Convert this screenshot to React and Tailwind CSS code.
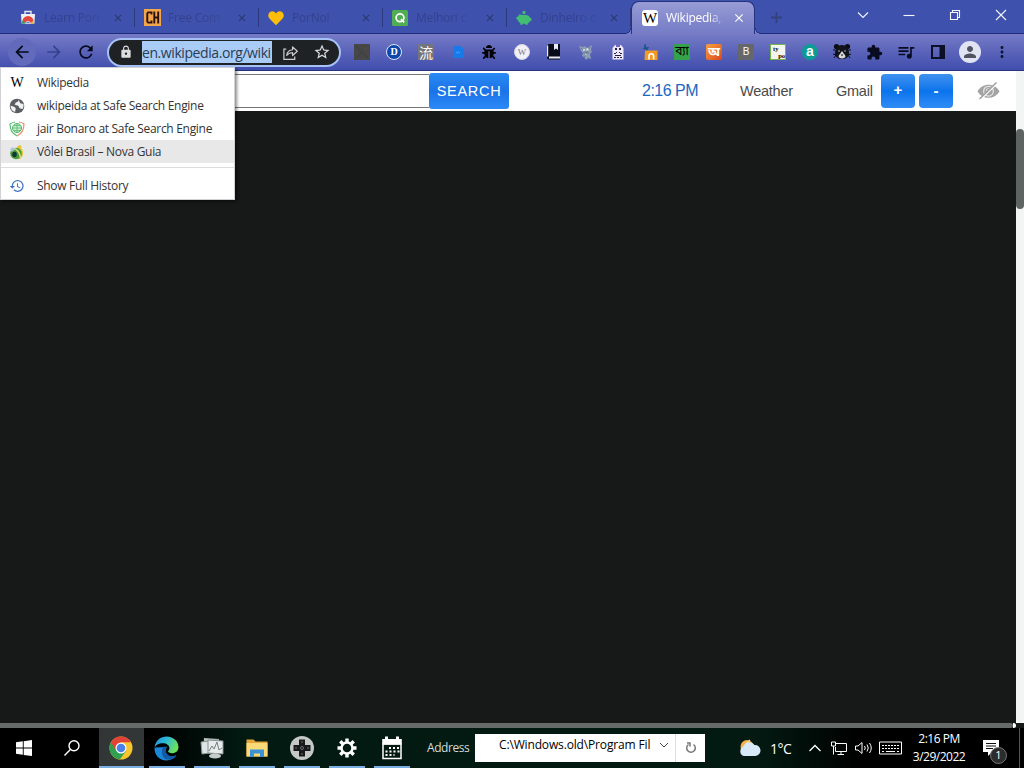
import {
  MdArrowBack,
  MdArrowForward,
  MdClose,
  MdExtension,
  MdHistory,
  MdLock,
  MdMoreVert,
  MdPerson,
  MdQueueMusic,
  MdRefresh,
  MdStarBorder,
} from 'react-icons/md';
import { FaBug } from 'react-icons/fa';

const TABS = [
  { title: 'Learn Pon', icon: <StoreIcon /> },
  { title: 'Free Com', icon: <ChIcon /> },
  { title: 'PorNo!', icon: <HeartIcon /> },
  { title: 'Melhori c', icon: <QIcon /> },
  { title: 'Dinheiro c', icon: <PiggyIcon /> },
];

/* ---------- favicons ---------- */

function StoreIcon() {
  return (
    <svg viewBox="0 0 16 16" className="size-4">
      <path d="M5 4V1.5h6V4" fill="none" stroke="#e8e8ee" strokeWidth="1.4" />
      <path d="M1 4h14l-.6 9.6H1.6z" fill="#eef0f4" />
      <path d="M2.500 11.500a5.500 5.500 0 0 1 11 0L10 13.600H6z" fill="#e4483b" />
      <path d="M2.300 10.500l3.700 3.100H1.700z" fill="#2f9e58" />
      <path d="M13.700 10.500L10 13.600h4.300z" fill="#f5c431" />
      <path d="M5.700 13.600a2.300 2.300 0 0 1 4.600 0z" fill="#4a86e8" stroke="#fff" strokeWidth=".6" />
    </svg>
  );
}

function ChIcon() {
  return (
    <svg viewBox="0 0 17 17" className="size-[17px]">
      <rect width="17" height="17" fill="#f3a649" />
      <path d="M7.500 5.500V3.400H4.200l-.9 1v8.200l.9 1h3.300v-2.100M10.300 2.500v12M14.200 2.500v12M10 8.500h4.300" fill="none" stroke="#2c0f10" strokeWidth="1.900" />
    </svg>
  );
}

function HeartIcon() {
  return (
    <svg viewBox="0 0 16 16" className="size-4">
      <path d="M8 15.2L1.2 8.2A4.2 4.2 0 0 1 .6 4C1.6.7 6 .4 8 3.4 10 .4 14.4.7 15.4 4a4.2 4.2 0 0 1-.6 4.2z" fill="#fcbd0b" />
    </svg>
  );
}

function QIcon() {
  return (
    <svg viewBox="0 0 16 16" className="size-4">
      <rect width="16" height="16" rx="1.5" fill="#4fae51" />
      <circle cx="8" cy="7.800" r="3.900" fill="none" stroke="#fff" strokeWidth="1.700" />
      <path d="M9 9.200l3.200 3.200" stroke="#fff" strokeWidth="1.700" />
    </svg>
  );
}

function PiggyIcon() {
  return (
    <svg viewBox="0 0 16 16" className="size-4">
      <circle cx="8" cy="2.500" r="1.700" fill="#43bd72" />
      <path d="M3 4l3 1h4.500C13 5.200 13.800 7 14.200 8l1.300.3v2.300l-1.800.9c-.6 1-1.200 1.500-2 2v1.200H9.600l-.4-1H6.800l-.4 1H4.400v-1.500C2.500 12 1.800 10.500 1.500 9.500L.4 9V7l1.300-.3C2 6 2.800 5.500 3.300 5.300z" fill="#43bd72" />
    </svg>
  );
}

function WikiIcon({ boxed }) {
  return (
    <span
      className={
        boxed
          ? 'flex size-4 items-center justify-center rounded-[3px] bg-white font-["Liberation_Serif",serif] text-[15px] leading-none text-black'
          : 'flex size-4 items-center justify-center font-["Liberation_Serif",serif] text-[14px] leading-none text-black'
      }
    >
      W
    </span>
  );
}

/* ---------- extension icons ---------- */

function Glyph({ children, className }) {
  return <span className={`flex size-4 items-center justify-center leading-none ${className}`}>{children}</span>;
}

function ShareIcon() {
  return (
    <svg viewBox="0 0 18 18" className="size-[17px]" fill="none" stroke="#c9cbd0" strokeWidth="1.300">
      <path d="M4.500 5.500H2v10.800h11.500v-3" />
      <path d="M5 12c.5-4 2.500-5.700 6.200-5.900V3l5 4.600-5 4.600V9.200C8.500 9.200 6.800 10 5 12z" strokeLinejoin="round" />
    </svg>
  );
}

function BookIcon() {
  return (
    <svg viewBox="0 0 16 16" className="size-4">
      <path d="M2.500 0H14v15.500H3A2 2 0 0 1 1 13.500V2z" fill="#080b19" />
      <path d="M8 0h4v6l-2-1.500L8 6zM1 1.500h1.200v11H1z" fill="#e9ebf5" />
      <path d="M3 12.500h11v2H3z" fill="#e9ebf5" />
    </svg>
  );
}

function BirdIcon() {
  return (
    <svg viewBox="0 0 16 16" className="size-4">
      <path d="M1 2l4 1 2-1 2 2 5-3-1 5 1 2-2 2 1 5-3-1-2 2-2-3-2-1 1-3-2-2z" fill="#8d9db4" />
      <path d="M3 4l4 4M12 3L9 8l-3 6M5 9h6" stroke="#6273a0" strokeWidth=".8" />
      <circle cx="9.500" cy="5.500" r="1.200" fill="#dfe7e0" />
      <circle cx="6" cy="6" r="1" fill="#dfe7e0" />
      <circle cx="8" cy="10.500" r="1" fill="#b9c9b8" />
    </svg>
  );
}

function GhostIcon() {
  return (
    <svg viewBox="0 0 16 16" className="size-4">
      <path d="M5 1h6l2.500 3v11.500h-11V4z" fill="#eee9fa" />
      <path d="M5 4h2v2H5zM9 4h2v2H9zM6 8h1v1H6zM9 8h1v1H9zM4 9h2v1H4zM10 9h2v1h-2zM5 11h6v1H5zM4 13h2v1H4zM7 13h2v1H7zM10 13h2v1h-2z" fill="#2a2142" />
      <path d="M6 1h4v2H6z" fill="#7c62ca" />
    </svg>
  );
}

function BagIcon() {
  return (
    <svg viewBox="0 0 16 16" className="size-4">
      <path d="M4 0v3h3L5 7 0 4h2V1z" fill="#1f568e" />
      <path d="M3 6.500h12.500V16H2.500z" fill="#f29a25" />
      <path d="M7 15.500v-3.500a2.300 2.300 0 0 1 4.600 0v3.500" fill="none" stroke="#fff" strokeWidth="1.600" />
    </svg>
  );
}

function BearIcon() {
  return (
    <svg viewBox="0 0 18 18" className="size-[18px]">
      <circle cx="3.500" cy="3.500" r="2.600" fill="#090b12" />
      <circle cx="14.500" cy="3.500" r="2.600" fill="#090b12" />
      <path d="M9 2c5 0 7 4 7 8 0 4-3 6-7 6s-7-2-7-6c0-4 2-8 7-8z" fill="#11131a" />
      <path d="M0 11l3 1-2 3M18 11l-3 1 2 3M0 7h2M16 7h2" stroke="#090b12" fill="none" />
      <circle cx="6" cy="8" r="1" fill="#77797f" />
      <circle cx="12" cy="8" r="1" fill="#77797f" />
      <path d="M9 8l3.500 5a3.500 2.400 0 0 1-7 0z" fill="#d9dadc" />
      <path d="M7.800 11.500h2.400L9 13.300z" fill="#11131a" />
    </svg>
  );
}

function SidePanelIcon() {
  return (
    <svg viewBox="0 0 16 16" className="size-4">
      <path d="M2 2h12v12H2z" fill="none" stroke="#0b1026" strokeWidth="2" />
      <path d="M9.500 2H14v12H9.500z" fill="#0b1026" />
    </svg>
  );
}

function DarkSquareIcon() {
  return (
    <svg viewBox="0 0 16 16" className="size-4">
      <rect width="16" height="16" fill="#474747" />
      <path d="M2 2l12 12M3 13l5-5" stroke="#3f4144" strokeWidth="1.500" />
      <path d="M11 3h2v2h-2z" fill="#5b4742" />
    </svg>
  );
}

const EXTENSIONS = [
  <DarkSquareIcon />,
  <Glyph className='rounded-full border border-[#dfe6ff] bg-[#0d47a8] font-["Liberation_Serif",serif] text-[10px] font-bold text-white'>D</Glyph>,
  <Glyph className='bg-[#74757a] font-["Noto_Sans_CJK_SC",sans-serif] text-[14px] text-white'>流</Glyph>,
  <svg viewBox="0 0 16 16" className="size-4">
    <path d="M3.500 2h7l3 3v9h-10z" fill="#167be9" />
    <path d="M6 7.500l1.500 2 1-2 1.500 1.500" stroke="#4b9ff5" strokeWidth="1" fill="none" />
  </svg>,
  <FaBug className="mr-0.5 size-[14px] text-black" />,
  <Glyph className='rounded-full border border-[#d6d7e8] bg-[#f1f0f7] font-["Liberation_Serif",serif] text-[9px] text-[#77768c]'>W</Glyph>,
  <BookIcon />,
  <BirdIcon />,
  <GhostIcon />,
  <BagIcon />,
  <Glyph className='bg-[#34a24a] font-["Noto_Sans_Bengali","Noto_Sans",sans-serif] text-[12px] text-black'>ব্যা</Glyph>,
  <Glyph className='rounded-xs bg-linear-to-br from-[#f6a13c] to-[#d9431f] font-["Noto_Sans_Bengali","Noto_Sans",sans-serif] text-[13px] font-bold text-white'>অ</Glyph>,
  <Glyph className='bg-[#65676b] font-["Liberation_Sans",sans-serif] text-[10px] text-white'>B</Glyph>,
  <Glyph className='flex-col border border-[#74b34d] bg-[#f4f5ef] font-["Liberation_Serif",serif] text-[6.5px] font-bold text-black'>
    <span className="self-start pl-0.5 leading-[7px]">ty</span>
    <span className="self-end leading-[7px]">po</span>
  </Glyph>,
  <Glyph className='rounded-full bg-[#0c9c94] pb-0.5 font-["Liberation_Sans",sans-serif] text-[14px] font-bold text-white'>a</Glyph>,
  <BearIcon />,
  <MdExtension className="size-[17px] text-[#080c20]" />,
  <MdQueueMusic className="size-5 text-[#080c20]" />,
  <SidePanelIcon />,
  <span className="flex size-[22px] items-center justify-center rounded-full bg-[#dfe3f4]">
    <MdPerson className="size-[18px] text-[#50545f]" />
  </span>,
  <MdMoreVert className="size-[18px] text-[#0e1436]" />,
];

/* ---------- browser window ---------- */

function Tab({ title, icon }) {
  return (
    <div className="flex h-[33px] w-[124px] items-center pt-0.5">
      <div className="flex w-[44px] items-center pl-[9px]">{icon}</div>
      <span className="-ml-[11px] w-[66px] overflow-hidden mask-r-from-50% text-[12px] tracking-[-0.2px] whitespace-nowrap text-[#34428e]">
        {title}
      </span>
      <MdClose className="ml-0.5 size-3 text-[#2b3970]" />
      <span className="ml-auto h-[19px] w-px bg-[#2c3a7f]" />
    </div>
  );
}

function TabStrip() {
  return (
    <div className="flex h-[34px] bg-[#3e51ad] bg-[linear-gradient(#202c78,#202c78)] bg-[length:100%_1px] bg-bottom bg-no-repeat pl-[11px]">
      {TABS.map((tab) => (
        <Tab key={tab.title} {...tab} />
      ))}
      <div className="relative mt-px h-[33px] w-[124px] shrink-0">
        {/* flared feet where the tab meets the toolbar */}
        <span className="absolute bottom-0 -left-[6px] size-[6px] bg-[radial-gradient(circle_at_0_0,#3e51ad_5px,#26337f_5px,#26337f_6px,#757bc6_6px)]" />
        <span className="absolute -right-[6px] bottom-0 size-[6px] bg-[radial-gradient(circle_at_100%_0,#3e51ad_5px,#26337f_5px,#26337f_6px,#757bc6_6px)]" />
        <div className="flex h-full items-center rounded-t-lg border border-b-0 border-[#26337f] bg-linear-to-b from-[#979bd5] to-[#757bc6] pl-[10px]">
          <WikiIcon boxed />
          <span className="ml-2 w-[58px] overflow-hidden mask-r-from-75% text-[12px] tracking-[-0.25px] whitespace-nowrap text-white">
            Wikipedia,
          </span>
          <MdClose className="ml-[8px] size-[14px] text-white" />
        </div>
      </div>
      <div className="ml-px flex w-10 items-center justify-center">
        <svg viewBox="0 0 12 12" className="size-[11px]" stroke="#34417a" strokeWidth="2">
          <path d="M6 0v12M0 6h12" />
        </svg>
      </div>
      <div className="ml-auto flex h-[29px] items-center">
        {[
          'M1 3.500l5 5 5-5',
          'M.5 6.500h11',
          'M1.500 3.500h7v7h-7zM3.500 3V1.500h7v7H9',
          'M1 1l10 10M11 1L1 11',
        ].map((d) => (
          <span key={d} className="flex w-[46px] items-center justify-center">
            <svg viewBox="0 0 12 12" className="size-3" fill="none" stroke="#f3f5ff" strokeWidth="1.100">
              <path d={d} />
            </svg>
          </span>
        ))}
      </div>
    </div>
  );
}

function Toolbar() {
  return (
    <div className="flex h-[37px] items-center border-b border-[#27357f] bg-linear-to-b from-[#757bc6] via-[#5a63b9] to-[#414eae]">
      <div className="flex">
        <span className="ml-2 flex size-7 items-center justify-center rounded-full bg-[#626abc]">
          <MdArrowBack className="size-5 text-[#060a1c]" />
        </span>
        <span className="ml-1 flex size-7 items-center justify-center">
          <MdArrowForward className="size-5 text-[#35418e]" />
        </span>
        <span className="ml-1 flex size-7 items-center justify-center">
          <MdRefresh className="size-5 text-[#060a1c]" />
        </span>
      </div>
      <div className="ml-[7px] flex h-[29px] w-[234px] items-center overflow-hidden rounded-full border-2 border-[#a5c1f5] bg-[#1f2224]">
        <MdLock className="ml-[10px] size-[14px] text-[#dcdde0]" />
        <span className="ml-[9px] flex h-[22px] w-[130px] items-center bg-[#a9ccf7] text-[14px] tracking-[-0.42px] whitespace-nowrap text-[#2a3d55]">
          en.wikipedia.org/wiki
        </span>
        <span className="ml-2 flex w-5 justify-center">
          <ShareIcon />
        </span>
        <span className="ml-3 flex w-5 justify-center">
          <MdStarBorder className="size-[18px] text-[#dadce0]" />
        </span>
      </div>
      <div className="ml-[5px] flex">
        {EXTENSIONS.map((icon, i) => (
          <span key={i} className="flex h-8 w-8 shrink-0 items-center justify-center">
            {icon}
          </span>
        ))}
      </div>
    </div>
  );
}

function HiddenEyeIcon() {
  return (
    <svg viewBox="0 0 23 18" className="mt-[11px] ml-6 h-[18px] w-[23px]">
      <path d="M.5 9.500C3 5 7 2.800 11.500 2.800S20 5 22.500 9.500C20 13.700 16 15.800 11.500 15.800S3 13.700.5 9.500z" fill="#a3a3a3" />
      <circle cx="11.500" cy="9.200" r="4.900" fill="none" stroke="#e4e4e4" strokeWidth="1.200" />
      <path d="M9 9a2.500 2.500 0 0 1 2.500-2.500" fill="none" stroke="#e4e4e4" />
      <path d="M3.500 17.800L20.500 1.300" stroke="#fff" strokeWidth="1.200" />
      <path d="M2.500 17L19.500.5" stroke="#a3a3a3" strokeWidth="1.600" />
    </svg>
  );
}

function PageHeader() {
  return (
    <div className='flex h-10 items-start bg-white font-["Liberation_Sans",Arial,sans-serif] text-[15px] text-[#4a4a4a]'>
      <div className="mt-[3px] h-[34px] w-[429px] border-y border-[#777]" />
      <button className="mt-0.5 h-9 w-20 rounded-[3px] bg-linear-to-b from-[#2b8af3] via-[#1a73e8] to-[#2d89f7] pt-px text-[14.5px] tracking-[0.7px] text-white">
        SEARCH
      </button>
      <div className="flex h-10 items-center">
        <span className="ml-[133px] w-[98px] text-[16px] tracking-[-0.5px] text-[#2067c0]">2:16 PM</span>
        <span className="w-[96px] pt-px text-[14.5px] tracking-[-0.25px]">Weather</span>
        <span className="w-[45px] pt-px text-[14.5px] tracking-[-0.25px]">Gmail</span>
      </div>
      <button className="mt-[3px] h-[34px] w-[34px] rounded-[4px] bg-linear-to-b from-[#3d91ee] via-[#0874ec] to-[#2f8cf5] pb-0.5 font-bold text-white">
        +
      </button>
      <button className="mt-[3px] ml-1 h-[34px] w-[34px] rounded-[4px] bg-linear-to-b from-[#3d91ee] via-[#0874ec] to-[#2f8cf5] font-bold text-white">
        -
      </button>
      <HiddenEyeIcon />
    </div>
  );
}

function GlobeIcon() {
  return (
    <svg viewBox="0 0 16 16" className="size-4">
      <circle cx="8" cy="8" r="7.300" fill="#5a5d61" />
      <path d="M9.500 1.500c.5 2-1 2.500-2.500 3-1 .3-.5 1.500-1.500 2C7 7.500 9.500 7 10 9c.3 1.500 1.700 1.500 3.500 2 1-1.500 1.300-3 .9-5C13 5.500 12 6 11 4.800z" fill="#f1f1f1" />
      <path d="M1.500 7.500c1.500 1 4 1 5 2.500.7 1.500-.5 2-.3 4C3.500 13.500 1.600 11 1.500 7.500z" fill="#f1f1f1" />
    </svg>
  );
}

function ShieldIcon() {
  return (
    <svg viewBox="0 0 16 16" className="size-4" fill="none">
      <path d="M6 1C4 1.200 2.500 2 1 3c0 5 2 9.500 7 12" stroke="#5fbd73" strokeWidth="1.200" />
      <path d="M10 1c2 .2 3.500 1 5 2 0 5-2 9.500-7 12" stroke="#e98d64" strokeWidth="1.200" />
      <circle cx="8" cy="7" r="4.500" fill="#c9efcf" stroke="#4cb469" />
      <path d="M3.500 7h9M8 2.500v9M5 4.500h6M5 9.500h6" stroke="#4cb469" strokeWidth=".7" />
    </svg>
  );
}

function BallIcon() {
  return (
    <svg viewBox="0 0 16 16" className="size-4">
      <path d="M8 3c2-3 6-2 4 1 3 3 3 8-1 11H7z" fill="#e5c735" />
      <circle cx="7" cy="9.500" r="5.800" fill="#4c9d3a" />
      <path d="M4 4.500c4 0 7 4 7.500 9.500" stroke="#d9e07a" strokeWidth="1.600" fill="none" />
      <ellipse cx="5.500" cy="10.500" rx="2.300" ry="2.800" fill="#123a35" />
      <path d="M1 5l3-2 2 2-3 3z" fill="#a7c9df" />
    </svg>
  );
}

const HISTORY = [
  { label: 'Wikipedia', icon: <WikiIcon /> },
  { label: 'wikipeida at Safe Search Engine', icon: <GlobeIcon /> },
  { label: 'jair Bonaro at Safe Search Engine', icon: <ShieldIcon /> },
  { label: 'Vôlei Brasil – Nova Guia', icon: <BallIcon />, active: true },
];

function HistoryMenu() {
  return (
    <div className="absolute top-[67px] left-0 h-[133px] w-[235px] border border-[#d2d2d6] bg-white pt-[3px] text-[12px] tracking-[-0.3px] whitespace-nowrap text-[#333] shadow-[2px_2px_3px_rgba(0,0,0,0.45)]">
      {HISTORY.map((row) => (
        <div key={row.label} className={`flex h-[23px] items-center pl-2 ${row.active ? 'bg-[#e8e8e9]' : ''}`}>
          {row.icon}
          <span className="ml-3">{row.label}</span>
        </div>
      ))}
      <div className="mt-[4px] h-px bg-[#dcdcdc]" />
      <div className="mt-[6px] flex h-[23px] items-center pl-2">
        <MdHistory className="size-4 text-[#3f74c9]" />
        <span className="ml-3">Show Full History</span>
      </div>
    </div>
  );
}

/* ---------- taskbar ---------- */

function ChromeLogo() {
  return (
    <svg viewBox="0 0 24 24" className="mr-px size-6">
      <circle cx="12" cy="12" r="11.500" fill="#f7c52c" />
      <path d="M12 12L2 6.300A11.500 11.500 0 0 0 10.700 23.400L17 14.900z" fill="#2fa04f" />
      <path d="M2 6.300A11.500 11.500 0 0 1 22 6.300H12l-5 8.600z" fill="#df4436" />
      <circle cx="12" cy="12" r="5.500" fill="#fff" />
      <circle cx="12" cy="12" r="4.300" fill="#4a80e8" />
    </svg>
  );
}

function EdgeLogo() {
  return (
    <svg viewBox="0 0 24 24" className="size-[25px]">
      <defs>
        <linearGradient id="edgeTop" x1="0" y1="0" x2="1" y2=".4">
          <stop offset="0" stopColor="#2191dd" />
          <stop offset=".5" stopColor="#2cb9d5" />
          <stop offset="1" stopColor="#6be05b" />
        </linearGradient>
      </defs>
      <path d="M.5 11C0 18 5 23.500 12 23.500c4 0 7.500-2 9.500-5-3 1.500-7 1.500-9-1-2-2-2-5 0-7z" fill="#1b86d8" />
      <path d="M.5 11C1.500 4 6.500.5 12 .5c7 0 11.500 5 11.500 10 0 4-3 6-6 6-2.500 0-4-.8-4-1.800 0-.7 1.300-1 1.300-3C14.800 9 12 7 8.500 7 4.500 7 1.500 9 .5 11z" fill="url(#edgeTop)" />
      <path d="M9.500 10c-3 3-2.500 9 1.500 12 3.500 1.500 8 .5 10.500-3.500-3 1.500-7 1.500-9-1-2-2-2-5 0-7z" fill="#1259a6" />
    </svg>
  );
}

function MonitorLogo() {
  return (
    <svg viewBox="0 0 24 24" className="size-6">
      <path d="M4 2l15 1-1 15-15-2z" fill="#b9c0c1" />
      <path d="M1 6l17-2v12L2 18z" fill="#dfe4e4" stroke="#8b9494" />
      <path d="M8 4l15 1v13l-15-1z" fill="#e7ebeb" stroke="#879090" />
      <path d="M9 15l3-5 2 3 3-7 2 8 3-2" fill="none" stroke="#758080" />
      <ellipse cx="15" cy="20" rx="6" ry="2.500" fill="#c6cccc" />
    </svg>
  );
}

function FolderLogo() {
  return (
    <svg viewBox="0 0 24 24" className="size-6">
      <path d="M1.500 3.500h7l2 2h12v15h-21z" fill="#e6a63a" />
      <path d="M1.500 7h21v13.500h-21z" fill="#fad978" />
      <path d="M5 21v-7.500h14V21h-4v-3.500H9V21z" fill="#3b92d4" />
    </svg>
  );
}

function GamepadLogo() {
  return (
    <svg viewBox="0 0 24 24" className="size-6">
      <circle cx="12" cy="12" r="12" fill="#c4c8c6" />
      <path d="M9 3.500h6V9h5.500v6H15v5.500H9V15H3.500V9H9z" fill="#17191b" />
      <path d="M10.500 12a1.500 1.500 0 1 0 3 0 1.500 1.500 0 1 0-3 0zM11 6h2M11 18h2M6 11v2M18 11v2" fill="none" stroke="#6b6f6e" />
    </svg>
  );
}

function GearLogo() {
  return (
    <svg viewBox="0 0 20 20" className="size-5">
      {[0, 45, 90, 135].map((a) => (
        <path key={a} d="M8.300.5h3.400v3.500H8.300zM8.300 16h3.400v3.500H8.300z" fill="#fff" transform={`rotate(${a} 10 10)`} />
      ))}
      <circle cx="10" cy="10" r="5.500" fill="none" stroke="#fff" strokeWidth="2.500" />
    </svg>
  );
}

function CalendarLogo() {
  return (
    <svg viewBox="0 0 22 24" className="h-6 w-[22px]">
      <path d="M2 8h18v14.500H2z" fill="none" stroke="#fff" strokeWidth="1.500" />
      <path d="M1.200 3H4V.5h3V3h8V.5h3V3h2.800v5.500H1.200z" fill="#fff" />
      <path d="M8 12h11M4.500 15.500h14M4.500 19h9" stroke="#fff" strokeWidth="2" strokeDasharray="2 2" />
    </svg>
  );
}

const TASKS = [
  { name: 'chrome', icon: <ChromeLogo />, active: true },
  { name: 'edge', icon: <EdgeLogo /> },
  { name: 'monitor', icon: <MonitorLogo /> },
  { name: 'explorer', icon: <FolderLogo /> },
  { name: 'gamepad', icon: <GamepadLogo /> },
  { name: 'settings', icon: <GearLogo /> },
  { name: 'calendar', icon: <CalendarLogo /> },
];

function Taskbar() {
  return (
    <div className="flex h-10 items-center bg-[linear-gradient(90deg,#000_0%,#000_15%,#021a11_24%,#021a11_74%,#000_84%)] text-white">
      <div className="flex w-12 justify-center">
        <svg viewBox="0 0 16 16" className="size-4" fill="#fff">
          <path d="M0 2.300l6.800-1v6.300H0zM7.700 1.200L16 0v7.600H7.700zM0 8.500h6.800v6.300L0 13.800zM7.700 8.500H16V16l-8.300-1.100z" />
        </svg>
      </div>
      <div className="flex w-[51px] pl-4">
        <svg viewBox="0 0 16 16" className="size-4" fill="none" stroke="#fff" strokeWidth="1.400">
          <circle cx="10" cy="5.800" r="5" />
          <path d="M6.400 9.400L.5 15.500" />
        </svg>
      </div>
      {TASKS.map((task) => (
        <div key={task.name} className="flex h-10 w-[45px] flex-col items-center">
          <div className={`flex h-[38px] w-full items-center justify-center pt-0.5 ${task.active ? 'bg-[#333637]' : ''}`}>{task.icon}</div>
          <div className={`h-0.5 bg-[#78aee0] ${task.active ? 'w-full' : 'w-9'}`} />
        </div>
      ))}
      <span className="ml-[13px] w-12 text-[12px] tracking-[-0.45px] text-[#d5dcd9]">Address</span>
      <div className="flex h-7 w-[230px] bg-white text-black">
        <span className="w-[178px] overflow-hidden pt-[3px] pl-6 text-[12px] leading-4 tracking-[-0.15px] whitespace-nowrap">
          C:\Windows.old\Program Fil
        </span>
        <svg viewBox="0 0 10 10" className="mt-[6px] ml-[6px] size-[10px]" fill="none" stroke="#444">
          <path d="M1 3l4 4 4-4" />
        </svg>
        <span className="ml-[6px] w-px bg-[#ddd]" />
        <span className="flex flex-1 items-center justify-center">
          <svg viewBox="0 0 12 12" className="size-3" fill="none" stroke="#777" strokeWidth="1.500">
            <path d="M8.500 2.500a4.300 4.300 0 1 1-5 0M2 1h3v3.500" />
          </svg>
        </span>
      </div>
      <svg viewBox="0 0 22 18" className="ml-[34px] h-[18px] w-[22px]">
        <circle cx="8" cy="7.500" r="6.500" fill="#f3b04c" />
        <path d="M2 10L11 1" stroke="#f8d59a" strokeWidth="1.200" />
        <path d="M5.500 17a4.500 4.500 0 0 1-1-8.800A6 6 0 0 1 15.500 6a5.500 5.500 0 0 1 1 11z" fill="#d7e8f8" />
      </svg>
      <span className="ml-[9px] w-[39px] text-[14px] tracking-[-0.5px]">1°C</span>
      <svg viewBox="0 0 12 8" className="h-2 w-3" fill="none" stroke="#fff" strokeWidth="1.300">
        <path d="M.5 7L6 1.500 11.500 7" />
      </svg>
      <svg viewBox="0 0 16 14" className="ml-[10px] h-[14px] w-4" fill="none" stroke="#fff">
        <path d="M4.500 2.500h11v8h-11V6M.5 1h4v4h-4zM2.500 5v8.500M10 10.500v3M6.500 13.500H13" />
      </svg>
      <svg viewBox="0 0 18 14" className="ml-2 h-[14px] w-[18px]" fill="none" stroke="#fff">
        <path d="M.5 5h2.500l4-3.500v11L3 9H.5zM9.500 5q1.500 2 0 4M12 3.500q2.500 3.500 0 7M14.500 2q3.500 5 0 10" />
      </svg>
      <svg viewBox="0 0 23 14" className="ml-[6px] h-[14px] w-[23px]" fill="none" stroke="#fff">
        <path d="M.5 1h22v12H.5z" />
        <path d="M3 4.500h17M3 7.500h17" strokeDasharray="2 1" />
        <path d="M3 10.500h2M7 10.500h9M18 10.500h2" />
      </svg>
      <div className="ml-[7px] flex w-[60px] flex-col items-center text-[12px] leading-[18px] tracking-[-0.5px] whitespace-nowrap">
        <span>2:16 PM</span>
        <span>3/29/2022</span>
      </div>
      <div className="relative ml-[14px] h-[16px] w-6">
        <svg viewBox="0 0 16 16" className="size-4">
          <path d="M0 0h16v12H9l-4 4v-4H0z" fill="#fff" />
          <path d="M3 3.500h10M3 6h10M3 8.500h7" stroke="#111" />
        </svg>
        <span className="absolute top-[7px] left-[7px] flex size-[17px] items-center justify-center rounded-full border border-[#777] bg-[#2c2c2c] text-[11px]">
          1
        </span>
      </div>
      <span className="ml-auto mr-1 h-10 w-px bg-[#55585a]" />
    </div>
  );
}

export default function App() {
  return (
    <div className='relative flex h-[768px] w-[1024px] flex-col overflow-hidden font-["Open_Sans","Noto_Sans",sans-serif]'>
      <TabStrip />
      <Toolbar />
      <div className="flex h-[652px]">
        <div className="flex w-[1016px] flex-col bg-[#171918]">
          <PageHeader />
        </div>
        <div className="w-2 rounded-b-md bg-[#f3f4f4] pt-[58px]">
          <div className="h-20 rounded-full bg-[#5d6462]" />
        </div>
      </div>
      <div className="flex h-[5px] bg-[#171918]">
        <div className="w-[1013px] rounded-r-full bg-[#666a69]" />
        <div className="w-[3px] rounded-r-full bg-white" />
      </div>
      <Taskbar />
      <HistoryMenu />
    </div>
  );
}
